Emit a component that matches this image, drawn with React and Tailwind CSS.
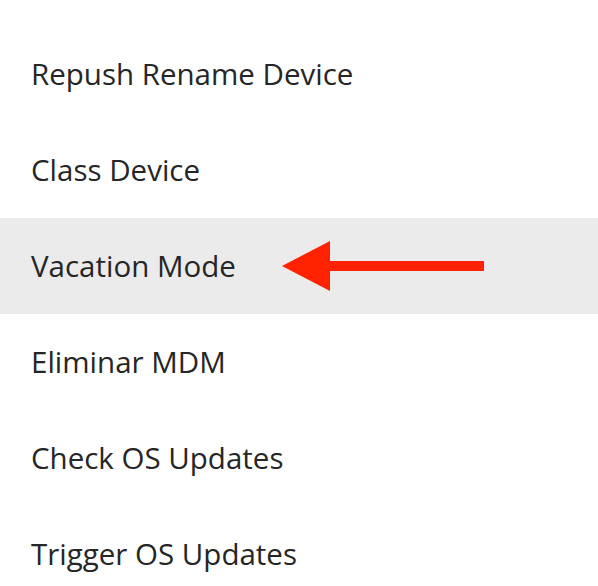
const items = [
    "Repush Rename Device",
    "Class Device",
    "Vacation Mode",
    "Eliminar MDM",
    "Check OS Updates",
    "Trigger OS Updates",
];

function App() {
    return (
        <div className="h-[586px] w-[598px] overflow-hidden bg-white pt-[26px] font-['Open_Sans',sans-serif] text-[#262626]">
            <ul>
                {items.map((label) => {
                    const active = label === "Vacation Mode";
                    return (
                        <li
                            key={label}
                            className={`relative flex h-[96px] items-center pl-[31px] text-[29.5px] ${
                                active ? "bg-[#ebebeb]" : ""
                            }`}
                        >
                            <span>{label}</span>
                            {active && (
                                <svg
                                    width="210"
                                    height="52"
                                    viewBox="0 0 210 52"
                                    className="absolute left-[280px] top-[22px]"
                                >
                                    <polygon points="2,26 50,1 50,51" fill="#ff2200" />
                                    <rect x="49" y="21" width="155" height="10" fill="#ff2200" />
                                </svg>
                            )}
                        </li>
                    );
                })}
            </ul>
        </div>
    );
}

export default App;
